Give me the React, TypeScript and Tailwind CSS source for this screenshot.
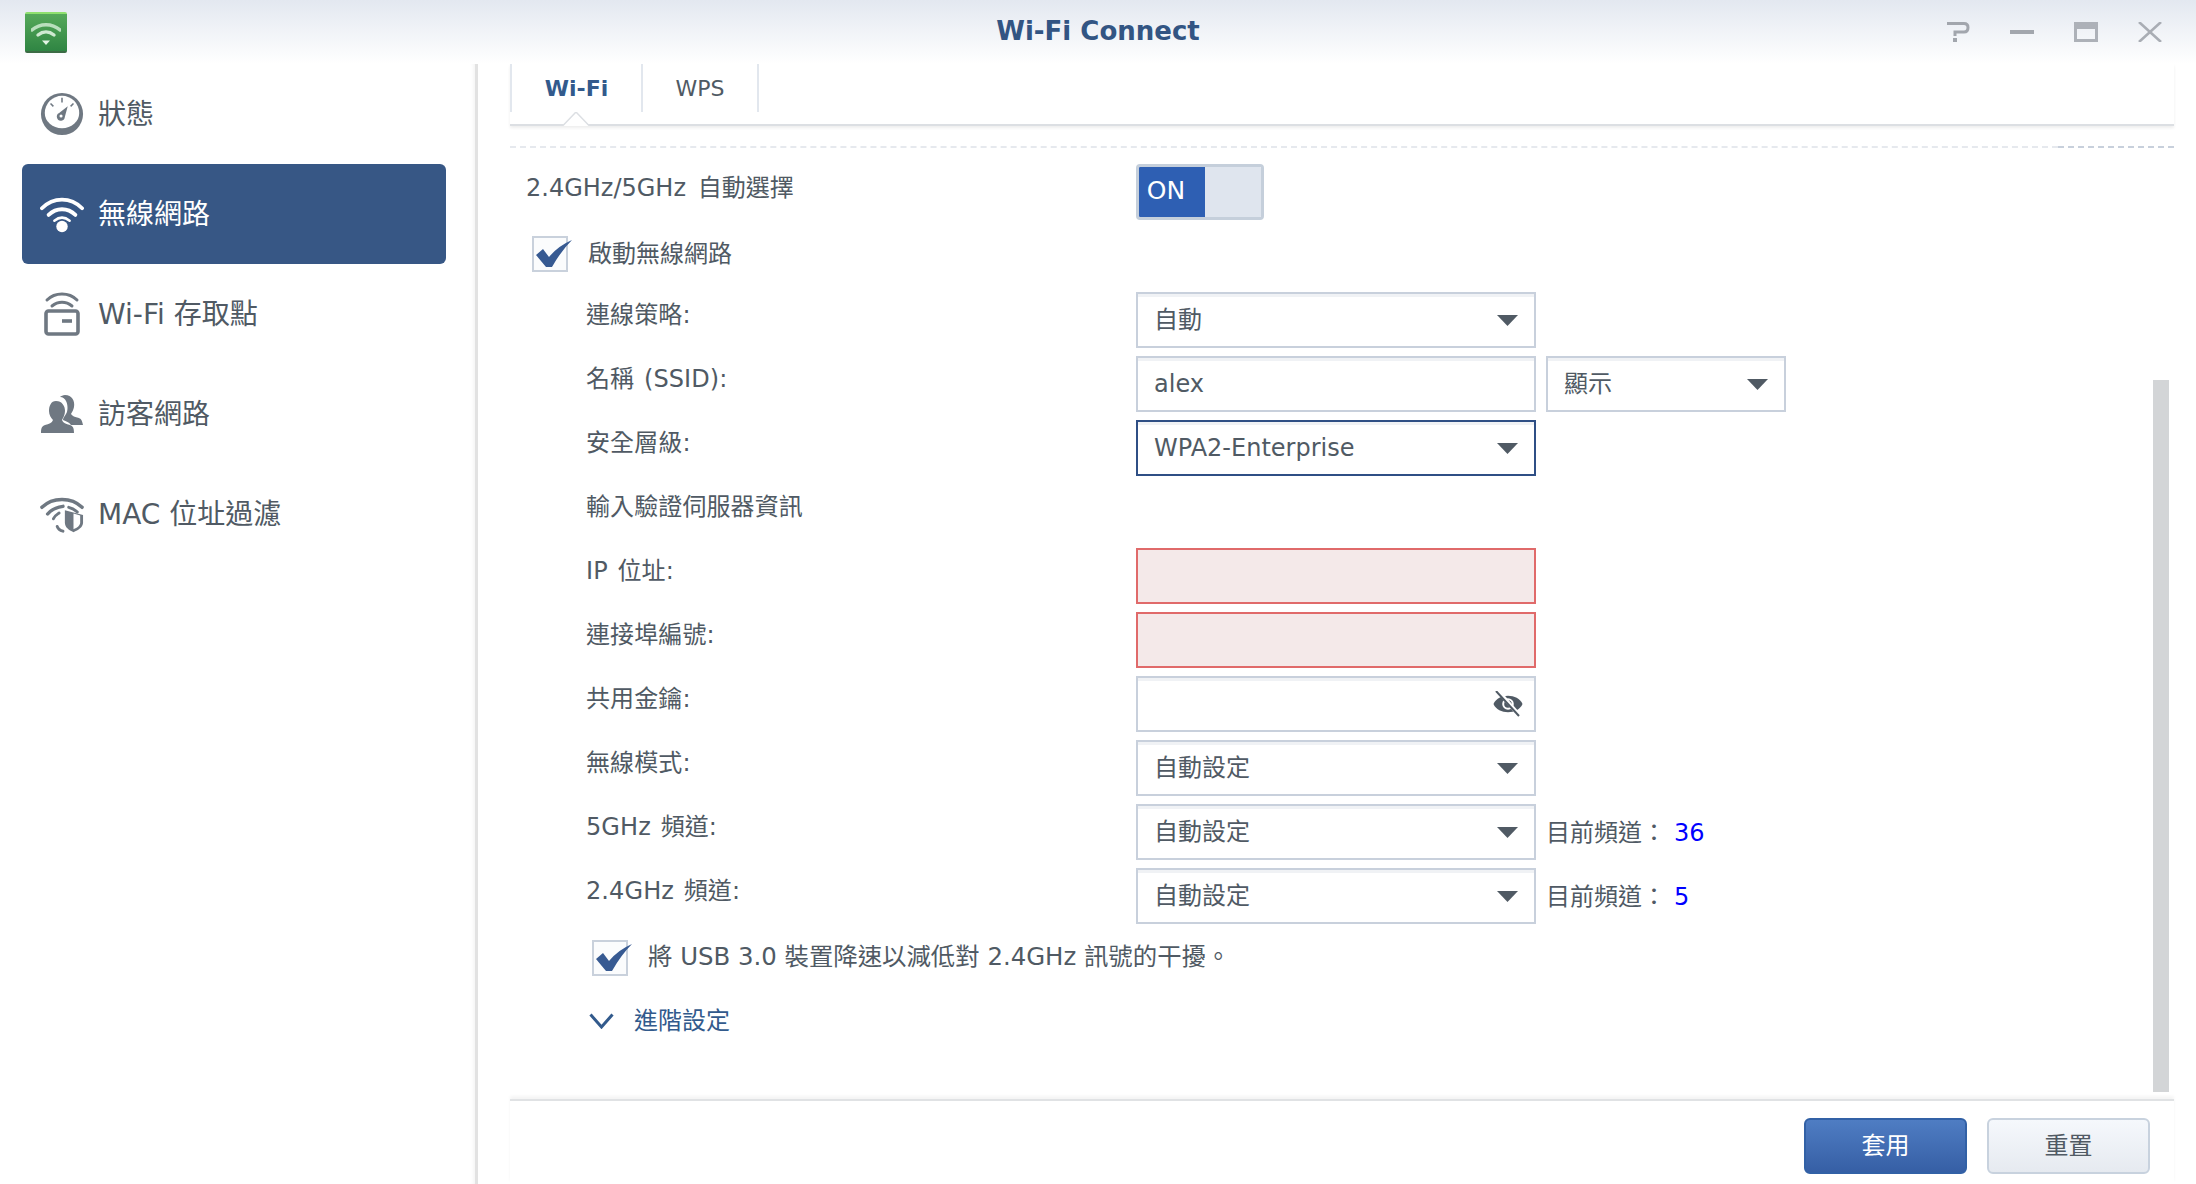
import React from "react";

const Arrow = () => (
  <svg width="21" height="11" viewBox="0 0 21 11" className="shrink-0"><path d="M0 0H21L10.5 11Z" fill="#505a64" /></svg>
);

const Check = () => (
  <svg width="36" height="27" viewBox="0 0 36 27" className="absolute left-[2px] top-[2px]">
    <path d="M0 15 L7 9 L13 17 Q22 6 36 0 Q25 11 16 27 L10 27 Z" fill="#375a92" />
  </svg>
);

const Checkbox = () => (
  <div className="relative w-9 h-9 border-2 border-[#c9d1dc] bg-[#fbfcfd] shrink-0">
    <Check />
  </div>
);

const Select = ({ value, w = "w-[400px]", focus = false }: { value: string; w?: string; focus?: boolean }) => (
  <div className={`${w} h-14 border-2 ${focus ? "border-[#2f4f85]" : "border-[#c8d0dc]"} bg-white flex items-center justify-between pl-4 pr-4 shadow-[inset_0_3px_0_#f0f2f5] shrink-0`}>
    <span className="text-[24px] text-[#505a64]">{value}</span>
    <Arrow />
  </div>
);

const Row = ({ label, children }: { label: string; children?: React.ReactNode }) => (
  <div className="flex h-14 mb-2 items-start">
    <div className="w-[626px] h-[46px] pl-[76px] flex items-center text-[24px] text-[#505a64] shrink-0 tracking-[0.1px] [word-spacing:2px]">{label}</div>
    {children}
  </div>
);

const Channel = ({ n }: { n: string }) => (
  <div className="ml-[10px] h-14 pt-[2px] flex items-center text-[24px] text-[#505a64]">
    <span className="w-[128px]">目前頻道：</span>
    <span className="text-[24px] text-[#0000ff]">{n}</span>
  </div>
);

const RedField = () => <div className="w-[400px] h-14 border-[2.5px] border-[#e06a6a] bg-[#f4e9e9]" />;

const GaugeIcon = () => (
  <svg width="46" height="46" viewBox="0 0 46 46">
    <circle cx="23" cy="23" r="22" fill="#6f7882" />
    <path d="M5 22a18 18 0 0 1 36 0 a18 16 0 0 1 -36 0Z" fill="#fff" />
    <path d="M23 6v5M11 12l3 3M35 12l-3 3" stroke="#6f7882" strokeWidth="1.6" />
    <path d="M29 15 L26 26 A4.2 4.2 0 1 1 20 22Z" fill="#6f7882" />
    <circle cx="22" cy="25" r="1.6" fill="#fff" />
  </svg>
);

const WifiIcon = ({ color }: { color: string }) => (
  <svg width="46" height="40" viewBox="0 0 46 40" fill="none" stroke={color} strokeLinecap="round">
    <path d="M2 14 C14 2 32 2 44 14" strokeWidth="4" />
    <path d="M9 21 C17 13 29 13 37 21" strokeWidth="4" />
    <path d="M15 27 C20 23 26 23 31 27" strokeWidth="2.6" />
    <circle cx="23" cy="33" r="6" fill={color} stroke="none" />
  </svg>
);

const ApIcon = () => (
  <svg width="36" height="44" viewBox="0 0 36 44" fill="none" stroke="#6f7882">
    <path d="M3 8 C11 0 25 0 33 8" strokeWidth="3" strokeLinecap="round" />
    <path d="M8 14 C14 9 22 9 28 14" strokeWidth="3" strokeLinecap="round" />
    <rect x="2" y="19" width="32" height="23" rx="2.5" strokeWidth="3.6" />
    <path d="M18 29H28" strokeWidth="3.6" />
  </svg>
);

const GuestIcon = () => (
  <svg width="42" height="38" viewBox="0 0 42 38" fill="#6f7882">
    <path d="M24 0c7 0 10 6 9 12-.5 3-2 5-3 7 1 2 4 3 8 4 2 1 3 2 4 7H30c-2-3-6-4-8-5 0-2 1-3 3-6 2-3 2-9 0-13-1-2-3-4-6-4 1-1 3-2 5-2Z" />
    <path d="M15 6c6 0 9 5 9 10 0 4-2 7-3 9 1 3 4 4 8 5 3 1 4 3 4 8H0c0-5 1-7 4-8 4-1 7-2 8-5-2-2-4-5-4-9 0-5 2-10 7-10Z" />
  </svg>
);

const MacIcon = () => (
  <svg width="46" height="38" viewBox="0 0 46 38" fill="none" stroke="#6f7882" strokeLinecap="round">
    <path d="M2 12 C13 1 33 1 44 12" strokeWidth="3.6" />
    <path d="M8 19 C12 14 18 12 24 11" strokeWidth="3.6" />
    <path d="M30 12 C34 13 37 15 39 17" strokeWidth="3" />
    <path d="M14 24 C15 21 17 20 20 18" strokeWidth="3" />
    <path d="M18 32 C19 35 21 36 24 37" strokeWidth="3" />
    <path d="M26 15 L45 20 V28 C45 33 40 36 35 38 C30 36 26 33 26 28Z" fill="#6f7882" stroke="none" />
    <path d="M35 18.5 L42 20.5 V28 C42 31 39 33.5 35 35Z" fill="#fff" stroke="none" />
  </svg>
);

const EyeIcon = () => (
  <svg width="30" height="26" viewBox="0 0 30 26" fill="none">
    <path d="M0.5 13 C5 2 25 2 29.5 13 C25 24 5 24 0.5 13Z" fill="#505a64" />
    <circle cx="15" cy="13" r="4.8" fill="none" stroke="#fff" strokeWidth="2" />
    <path d="M5 0 L27 25" stroke="#fff" strokeWidth="4" />
    <path d="M3 0 L26 25" stroke="#505a64" strokeWidth="2" />
  </svg>
);

const SideItem = ({ icon, label, active = false }: { icon: React.ReactNode; label: string; active?: boolean }) => (
  <div className={`h-[100px] mx-[22px] w-[424px] rounded-[6px] flex items-center ${active ? "bg-[#375785] text-white" : "text-[#505a64]"}`}>
    <div className="w-[76px] pl-[18px] flex justify-center shrink-0 pr-[14px]">{icon}</div>
    <span className="text-[28px] pt-[1px]">{label}</span>
  </div>
);

export default function App() {
  return (
    <div className="w-full h-screen bg-white flex flex-col overflow-hidden font-['DejaVu_Sans','Noto_Sans_CJK_TC',sans-serif]">
      <header className="h-16 shrink-0 flex items-center relative bg-gradient-to-b from-[#e3e8f0] to-[#ffffff]">
        <div className="ml-[25px] w-[42px] h-[41px] rounded-[2px] flex items-start justify-center pt-[8px] bg-gradient-to-b from-[#55a95a] to-[#2f8543] border-t-2 border-t-[#8fe06f] border-b-2 border-b-[#3b6b45]">
          <svg width="30" height="24" viewBox="0 0 30 24" fill="none" strokeLinecap="round">
            <path d="M1 8 C9 1 21 1 29 8" stroke="#b9dfbd" strokeWidth="3.4" />
            <path d="M7 13 C12 9 18 9 23 13" stroke="#cfe9d1" strokeWidth="3.4" />
            <path d="M11 18.5 H19 L15 23Z" fill="#e4f4e5" />
          </svg>
        </div>
        <div className="absolute left-0 right-0 pb-[2px] text-center text-[26px] font-bold text-[#325583]">Wi-Fi Connect</div>
        <div className="ml-auto mr-[34px] flex items-center gap-[40px]">
          <svg width="24" height="20" viewBox="0 0 24 20" fill="none">
            <path d="M1 1.5H18Q22 1.5 22 5.5Q22 10 18 10H9V14" stroke="#a2a6ad" strokeWidth="3" />
            <rect x="7" y="16" width="4" height="4" fill="#a2a6ad" />
          </svg>
          <svg width="24" height="20" viewBox="0 0 24 20"><rect y="8" width="24" height="4" fill="#a2a6ad" /></svg>
          <svg width="24" height="20" viewBox="0 0 24 20"><path d="M0 0H24V20H0Z M3 7V17H21V7Z" fill="#adb1b8" fillRule="evenodd" /></svg>
          <svg width="24" height="20" viewBox="0 0 24 20" fill="none"><path d="M1 0L23 20M23 0L1 20" stroke="#a9adb4" strokeWidth="2.6" /></svg>
        </div>
      </header>

      <div className="flex-1 flex min-h-0">
        <aside className="w-[478px] shrink-0 border-r-[3px] border-r-[#e2e2e2] shadow-[inset_-4px_0_4px_-3px_#f1f1f1]">
          <SideItem icon={<GaugeIcon />} label="狀態" />
          <SideItem icon={<WifiIcon color="#ffffff" />} label="無線網路" active />
          <SideItem icon={<ApIcon />} label="Wi-Fi 存取點" />
          <SideItem icon={<GuestIcon />} label="訪客網路" />
          <SideItem icon={<MacIcon />} label="MAC 位址過濾" />
        </aside>

        <main className="flex-1 ml-[32px] mr-[22px] flex flex-col min-w-0">
          <div className="h-[62px] shrink-0 relative border-b-2 border-b-[#dcdfe3] shadow-[0_2px_3px_#eeeeee]">
            <div className="flex h-12">
              <div className="w-[133px] pt-[1px] border-l-2 border-r-2 border-[#e2e7ee] flex items-center justify-center text-[22px] font-bold text-[#325a8c]">Wi-Fi</div>
              <div className="w-[116px] pt-[1px] border-r-2 border-[#e2e7ee] flex items-center justify-center text-[22px] text-[#505a64]">WPS</div>
            </div>
            <svg width="26" height="14" viewBox="0 0 26 14" className="absolute left-[53px] top-[48px]">
              <path d="M0 14L13 0L26 14" fill="#fff" />
              <path d="M0 13.5L13 0L26 13.5" fill="none" stroke="#dcdfe3" strokeWidth="1.5" />
            </svg>
          </div>

          <div className="mt-5 h-0 shrink-0 flex">
            <div className="flex-1 border-t-2 border-dashed border-t-[#e6e9ee]" />
            <div className="w-[116px] border-t-2 border-dashed border-t-[#c8d0dc]" />
          </div>

          <div className="relative flex-1 min-h-0 pt-[18px]">
            <div className="absolute right-[5px] top-[234px] w-4 h-[712px] bg-[#d3d5d7]" />

            <div className="flex h-14 items-center">
              <div className="w-[626px] pl-4 pb-[8px] text-[24px] text-[#505a64] [word-spacing:4px]">2.4GHz/5GHz 自動選擇</div>
              <div className="w-[128px] h-14 rounded-[4px] border-[3px] border-[#c5cfdb] flex overflow-hidden">
                <div className="w-[66px] bg-[#2e5fb3] text-white text-[25px] flex items-center justify-center pr-3 pb-[2px]">ON</div>
                <div className="flex-1 bg-[#dfe5ee]" />
              </div>
            </div>

            <div className="mt-4 mb-5 ml-[22px] h-9 flex items-center">
              <Checkbox />
              <span className="ml-[20px] text-[24px] text-[#505a64]">啟動無線網路</span>
            </div>

            <Row label="連線策略:"><Select value="自動" /></Row>
            <Row label="名稱 (SSID):">
              <div className="w-[400px] h-14 border-2 border-[#c8d0dc] flex items-center pl-4 text-[24px] text-[#505a64] shadow-[inset_0_3px_0_#f0f2f5]">alex</div>
              <div className="ml-[10px]"><Select value="顯示" w="w-[240px]" /></div>
            </Row>
            <Row label="安全層級:"><Select value="WPA2-Enterprise" focus /></Row>
            <Row label="輸入驗證伺服器資訊" />
            <Row label="IP 位址:"><RedField /></Row>
            <Row label="連接埠編號:"><RedField /></Row>
            <Row label="共用金鑰:">
              <div className="w-[400px] h-14 border-2 border-[#c8d0dc] flex items-center justify-end pr-[11px] shadow-[inset_0_3px_0_#f0f2f5]"><EyeIcon /></div>
            </Row>
            <Row label="無線模式:"><Select value="自動設定" /></Row>
            <Row label="5GHz 頻道:"><Select value="自動設定" /><Channel n="36" /></Row>
            <Row label="2.4GHz 頻道:"><Select value="自動設定" /><Channel n="5" /></Row>

            <div className="mt-4 ml-[82px] h-9 flex items-center">
              <Checkbox />
              <span className="ml-[20px] pb-[2px] text-[24.4px] text-[#505a64]">將 USB 3.0 裝置降速以減低對 2.4GHz 訊號的干擾。</span>
            </div>

            <div className="mt-[29px] ml-[79px] h-8 flex items-center">
              <svg width="25" height="16" viewBox="0 0 25 16" fill="none"><path d="M1.5 1.5L12.5 14L23.5 1.5" stroke="#325a8c" strokeWidth="3" /></svg>
              <span className="ml-[20px] text-[24px] text-[#325a8c]">進階設定</span>
            </div>
          </div>

          <footer className="h-[85px] shrink-0 border-t-2 border-t-[#e0e2e4] shadow-[0_-3px_3px_#f5f5f5] flex items-start justify-end pt-[17px] pr-[24px] gap-5">
            <button className="w-[163px] h-14 rounded-[6px] border-2 border-[#3261a6] bg-gradient-to-b from-[#4f7dc3] to-[#365fa5] text-white text-[24px]">套用</button>
            <button className="w-[163px] h-14 rounded-[6px] border-2 border-[#c8d2de] bg-gradient-to-b from-[#f5f8fc] to-[#e6eaf0] text-[#505a64] text-[24px]">重置</button>
          </footer>
        </main>
      </div>
    </div>
  );
}
